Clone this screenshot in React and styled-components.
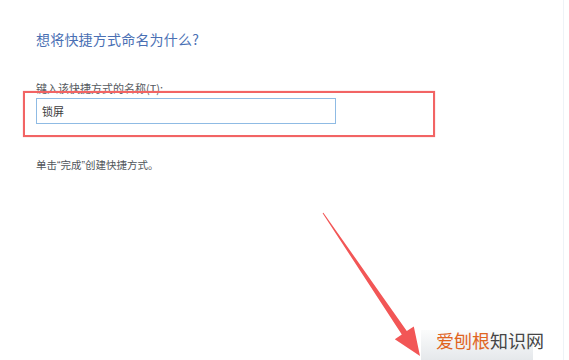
import React from "react";
import styled, { createGlobalStyle } from "styled-components";

const Global = createGlobalStyle`
  html, body { margin: 0; padding: 0; background: #ffffff; }
  body { width: 569px; height: 360px; overflow: hidden; font-family: "Noto Sans CJK SC", "Noto Sans", sans-serif; }
`;

const Page = styled.div`
  position: relative;
  box-sizing: border-box;
  width: 564px;
  height: 360px;
  border-right: 1px solid #eef3f7;
  padding: 29px 0 0 36px;
  display: flex;
  flex-direction: column;
  align-items: flex-start;
`;

const Title = styled.h1`
  margin: 0;
  font-size: 14px;
  line-height: 20px;
  font-weight: 400;
  color: #4a70b4;
  letter-spacing: 0.2px;
`;

const Label = styled.label`
  margin-top: 32px;
  font-size: 11px;
  line-height: 14px;
  color: #555a60;
`;

const Highlight = styled.div`
  margin: -4px 0 0 -13px;
  box-sizing: border-box;
  width: 412px;
  height: 46px;
  border: 2px solid #f26464;
  padding: 5px 0 0 11px;
  box-shadow: 0 0 1px rgba(242, 100, 100, 0.6);
`;

const NameInput = styled.div`
  box-sizing: border-box;
  width: 300px;
  height: 26px;
  border: 1px solid #8fbbe4;
  padding: 0 0 0 5px;
  display: flex;
  align-items: center;
  font-size: 11px;
  color: #3c3c3c;
  background: #fff;
`;

const Hint = styled.p`
  margin: 21px 0 0;
  font-size: 10.5px;
  line-height: 14px;
  color: #50555a;
`;

const Quote = styled.span`
  font-family: "Liberation Sans", Arial, sans-serif;
`;

const ArrowSvg = styled.svg`
  position: absolute;
  left: 0;
  top: 0;
  width: 569px;
  height: 360px;
  pointer-events: none;
`;

const Watermark = styled.div`
  position: absolute;
  left: 421px;
  top: 330px;
  width: 112px;
  height: 30px;
  background: linear-gradient(to bottom, #fbfcfc, #e5e8eb);
  display: flex;
  align-items: flex-start;
  padding: 0 0 0 15px;
  box-sizing: border-box;
  white-space: nowrap;
  font-size: 18px;
  line-height: 20px;
`;

const Brand = styled.span`
  color: ${(p) => (p.$accent ? "#e0641f" : "#454545")};
`;

function Arrow() {
  const sx = 323, sy = 213, tx = 420, ty = 356;
  const dx = tx - sx, dy = ty - sy;
  const len = Math.hypot(dx, dy);
  const ux = dx / len, uy = dy / len;
  const px = uy, py = -ux;
  const headLen = 28, headHalf = 11.5, baseHalf = 3;
  const bx = tx - ux * headLen, by = ty - uy * headLen;
  const pts = [
    [sx + px * 0.5, sy + py * 0.5],
    [bx + px * baseHalf, by + py * baseHalf],
    [bx + px * headHalf, by + py * headHalf],
    [tx, ty],
    [bx - px * headHalf, by - py * headHalf],
    [bx - px * baseHalf, by - py * baseHalf],
    [sx - px * 0.5, sy - py * 0.5],
  ]
    .map((p) => p.map((v) => v.toFixed(1)).join(","))
    .join(" ");
  return (
    <ArrowSvg viewBox="0 0 569 360">
      <defs>
        <filter id="soft" x="-10%" y="-10%" width="120%" height="120%">
          <feGaussianBlur stdDeviation="0.6" />
        </filter>
      </defs>
      <polygon points={pts} fill="#f25656" filter="url(#soft)" />
    </ArrowSvg>
  );
}

export default function App() {
  return (
    <>
      <Global />
      <Page>
        <Title>想将快捷方式命名为什么?</Title>
        <Label>键入该快捷方式的名称(T):</Label>
        <Highlight>
          <NameInput>锁屏</NameInput>
        </Highlight>
        <Hint>
          单击<Quote>“</Quote>完成<Quote>”</Quote>创建快捷方式。
        </Hint>
        <Arrow />
        <Watermark>
          <Brand $accent>爱刨根</Brand>
          <Brand>知识网</Brand>
        </Watermark>
      </Page>
    </>
  );
}
